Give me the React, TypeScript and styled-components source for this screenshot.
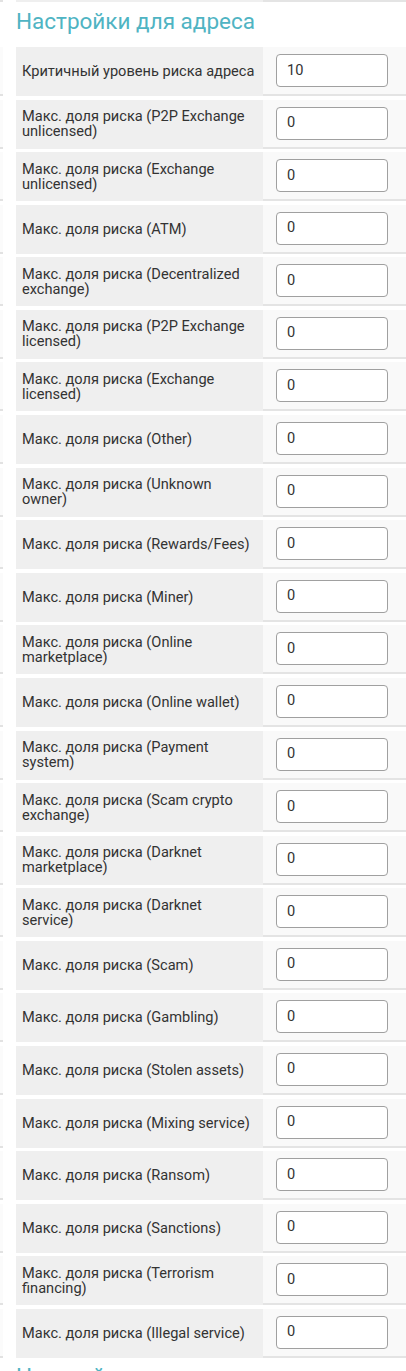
import React from "react";
import styled, { createGlobalStyle } from "styled-components";

const Global = createGlobalStyle`
  html, body { margin: 0; padding: 0; background: #fff; }
  body { font-family: Roboto, "Noto Sans", Arial, sans-serif; color: #333; }
  * { box-sizing: border-box; }
`;

const Page = styled.div`
  width: 406px;
  height: 1371px;
  overflow: hidden;
  display: flex;
  flex-direction: column;
`;

const Row = styled.div<{ $last?: boolean }>`
  display: flex;
  align-items: stretch;
  margin-bottom: ${(p) => (p.$last ? "0" : "3.58px")};
`;

const Stub = styled.div`
  width: 3px;
  background: #fbfbfb;
  border-bottom: 2px solid #e2e2e2;
  margin-right: 13px;
`;

const Label = styled.div<{ $nowrap?: boolean }>`
  width: 247px;
  height: 49px;
  background: #efefef;
  padding: 0 10px 0 6px;
  display: flex;
  align-items: center;
  font-size: 14.6px;
  line-height: 15px;
  color: #333;
  white-space: ${(p) => (p.$nowrap ? "nowrap" : "normal")};
`;

const Cell = styled.div`
  flex: 1;
  background: #f9f9f9;
  border-bottom: 2px solid #e4e4e4;
  display: flex;
  align-items: center;
  padding-left: 13px;
`;

const Input = styled.input`
  width: 112px;
  height: 33px;
  border: 1px solid #a0a0a0;
  border-radius: 4px;
  background: #fff;
  padding: 0 0 2px 10px;
  font-family: Roboto, Arial, sans-serif;
  font-size: 14.6px;
  color: #333;
  outline: none;
`;

const TopRow = styled.div`
  display: flex;
  height: 5px;
`;

const TopLabel = styled.div`
  width: 247px;
  background: #efefef;
`;

const TopCell = styled.div`
  flex: 1;
  background: #f9f9f9;
  border-bottom: 2px solid #e4e4e4;
`;

const Heading = styled.h2`
  margin: 6px 0 12px 16px;
  font-family: Roboto, Arial, sans-serif;
  font-weight: 400;
  font-size: 22.5px;
  line-height: 27px;
  color: #4fb4c3;
  white-space: nowrap;
`;

const NextHeading = styled(Heading)`
  margin-top: 5px;
`;

const rows: { label: string; value: string }[] = [
  { label: "Критичный уровень риска адреса", value: "10" },
  ...[
    "P2P Exchange unlicensed",
    "Exchange unlicensed",
    "ATM",
    "Decentralized exchange",
    "P2P Exchange licensed",
    "Exchange licensed",
    "Other",
    "Unknown owner",
    "Rewards/Fees",
    "Miner",
    "Online marketplace",
    "Online wallet",
    "Payment system",
    "Scam crypto exchange",
    "Darknet marketplace",
    "Darknet service",
    "Scam",
    "Gambling",
    "Stolen assets",
    "Mixing service",
    "Ransom",
    "Sanctions",
    "Terrorism financing",
    "Illegal service",
  ].map((n) => ({ label: `Макс. доля риска (${n})`, value: "0" })),
];

export default function App() {
  return (
    <>
      <Global />
      <Page>
        <TopRow>
          <Stub />
          <TopLabel />
          <TopCell />
        </TopRow>
        <Heading>Настройки для адреса</Heading>
        {rows.map((r, i) => (
          <Row key={i} $last={i === rows.length - 1}>
            <Stub />
            <Label $nowrap={i === 0}>{r.label}</Label>
            <Cell>
              <Input defaultValue={r.value} />
            </Cell>
          </Row>
        ))}
        <NextHeading>Настройки для транзакции</NextHeading>
      </Page>
    </>
  );
}
